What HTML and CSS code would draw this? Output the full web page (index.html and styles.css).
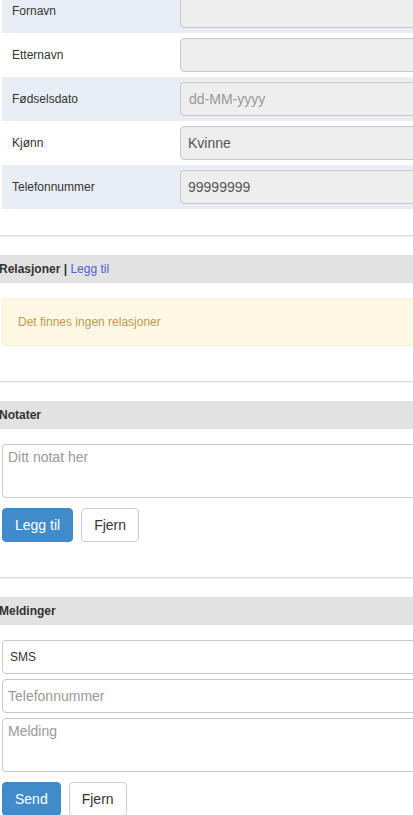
FILE: index.html
```html
<!DOCTYPE html>
<html lang="no">
<head>
<meta charset="utf-8">
<title>Person</title>
<link rel="stylesheet" href="styles.css">
</head>
<body>
<div class="page">
  <div class="person">
    <div class="row shade"><div class="label">Fornavn</div><input class="ctl ro" readonly></div>
    <div class="row"><div class="label">Etternavn</div><input class="ctl ro" readonly></div>
    <div class="row shade"><div class="label">Fødselsdato</div><input class="ctl ro pl8" readonly placeholder="dd-MM-yyyy"></div>
    <div class="row"><div class="label">Kjønn</div><input class="ctl ro" readonly value="Kvinne"></div>
    <div class="row shade"><div class="label">Telefonnummer</div><input class="ctl ro" readonly value="99999999"></div>
  </div>

  <hr class="sep">
  <div class="section-head"><b>Relasjoner |</b> <a class="link" href="#">Legg til</a></div>
  <div class="section-body">
    <div class="alert">Det finnes ingen relasjoner</div>
  </div>

  <hr class="sep">
  <div class="section-head"><b>Notater</b></div>
  <div class="section-body">
    <textarea class="ctl area" placeholder="Ditt notat her"></textarea>
    <div class="btns"><button class="btn primary">Legg til</button><button class="btn">Fjern</button></div>
  </div>

  <hr class="sep">
  <div class="section-head"><b>Meldinger</b></div>
  <div class="section-body">
    <select class="ctl sel"><option>SMS</option></select>
    <input class="ctl plain stack" placeholder="Telefonnummer">
    <textarea class="ctl area stack" placeholder="Melding"></textarea>
    <div class="btns"><button class="btn primary">Send</button><button class="btn">Fjern</button></div>
  </div>
</div>
</body>
</html>
```

FILE: styles.css
```css
* { box-sizing: border-box; }
html, body { margin: 0; padding: 0; }
body {
  font-family: "Liberation Sans", Arial, sans-serif;
  color: #333;
  background: #fff;
  width: 413px;
  height: 815px;
  overflow: hidden;
}
.page {
  width: 450px;
  margin-top: -11px;
  padding-left: 2px;
}
.person { display: flex; flex-direction: column; }
.row {
  display: grid;
  grid-template-columns: 178px 1fr;
  align-items: center;
  height: 44px;
}
.row.shade { background: #e9eef6; }
.label { font-size: 12px; padding-left: 10px; }

.ctl {
  display: block;
  width: 100%;
  height: 34px;
  font-family: "Liberation Sans", Arial, sans-serif;
  font-size: 14px;
  color: #555;
  background: #fff;
  border: 1px solid #c8c8c8;
  border-radius: 4px;
  padding: 0 7px;
  outline: none;
  margin: 0;
}
.ctl::placeholder { color: #999; opacity: 1; }
.ctl.ro { background: #eee; }
.ctl.pl8 { padding-left: 8px; }
.ctl.plain { padding-left: 5px; }
.ctl.sel {
  -webkit-appearance: none;
  appearance: none;
  font-size: 12px;
  color: #333;
  padding-left: 7px;
}
.ctl.area {
  height: 54px;
  padding: 2px 5px;
  line-height: 20px;
  resize: none;
}
.stack { margin-top: 5px; }

.sep {
  margin: 26px 0 18px -2px;
  height: 0;
  border: 0;
  border-top: 1px solid #dcdcdc;
  border-bottom: 1px solid #f1f1f1;
}
.section-head {
  margin-left: -2px;
  height: 28px;
  line-height: 28px;
  background: #e2e2e2;
  font-size: 12px;
  text-indent: -1px;
  white-space: nowrap;
}
.section-head b { font-weight: bold; color: #333; }
.link { color: #4b63d4; text-decoration: none; }
.section-body {
  display: flex;
  flex-direction: column;
  margin-top: 15px;
  padding-bottom: 9px;
}
.alert {
  background: #fcf8e3;
  border: 1px solid #fbeed5;
  border-radius: 4px;
  color: #c09853;
  font-size: 12px;
  line-height: 16px;
  padding: 15px 15px;
}
.btns {
  display: flex;
  gap: 8px;
  margin-top: 10px;
}
.btn {
  font-family: "Liberation Sans", Arial, sans-serif;
  font-size: 14px;
  height: 34px;
  padding: 0 12px;
  border: 1px solid #ccc;
  border-radius: 4px;
  background: #fff;
  color: #333;
  line-height: 32px;
}
.btn.primary {
  background: #428bca;
  border-color: #3f86c4;
  color: #fff;
}
```
